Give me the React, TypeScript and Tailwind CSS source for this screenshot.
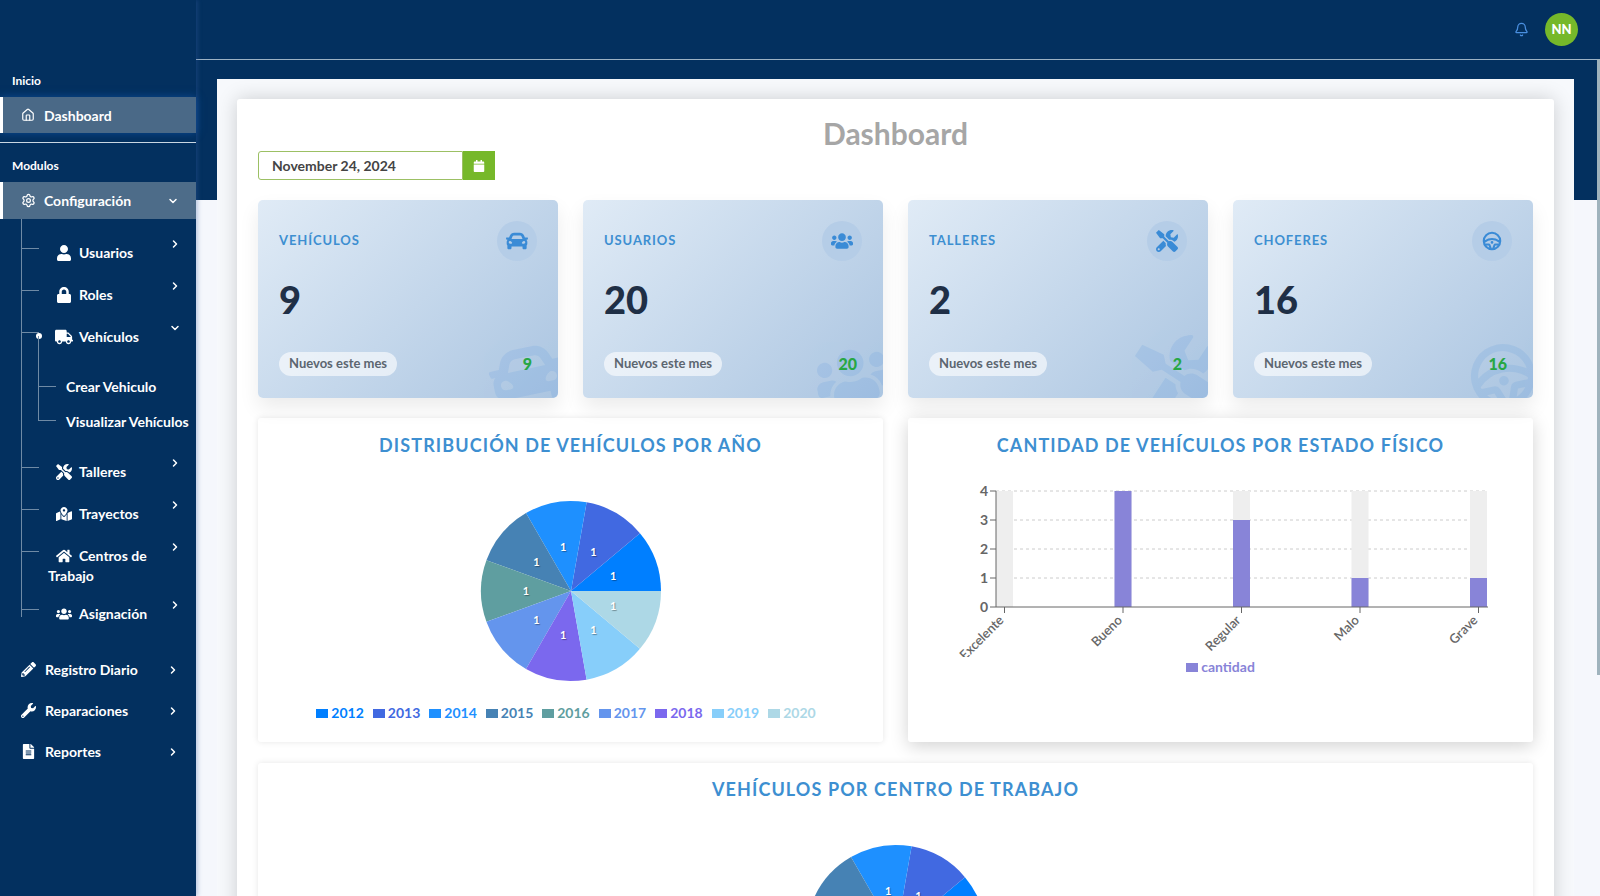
import { Bell, ChevronDown, ChevronRight, Home, Settings } from "lucide-react";
import { ReactNode } from "react";
import {
  FaCalendar,
  FaCar,
  FaFileAlt,
  FaHome,
  FaLock,
  FaMapMarkedAlt,
  FaPencilAlt,
  FaTools,
  FaTruck,
  FaUser,
  FaUsers,
  FaWrench,
} from "react-icons/fa";
import { PiSteeringWheelBold } from "react-icons/pi";

const slices = [
  { year: "2012", color: "#007fff" },
  { year: "2013", color: "#4169e1" },
  { year: "2014", color: "#1e90ff" },
  { year: "2015", color: "#4682b4" },
  { year: "2016", color: "#5f9ea0" },
  { year: "2017", color: "#6495ed" },
  { year: "2018", color: "#7b68ee" },
  { year: "2019", color: "#87cefa" },
  { year: "2020", color: "#add8e6" },
];

const bars = [
  { name: "Excelente", value: 0 },
  { name: "Bueno", value: 4 },
  { name: "Regular", value: 3 },
  { name: "Malo", value: 1 },
  { name: "Grave", value: 1 },
];

const stats = [
  { label: "VEHÍCULOS", value: "9", Icon: FaCar },
  { label: "USUARIOS", value: "20", Icon: FaUsers },
  { label: "TALLERES", value: "2", Icon: FaTools },
  { label: "CHOFERES", value: "16", Icon: PiSteeringWheelBold },
];

function Pie() {
  const cx = 100;
  const cy = 100;
  const r = 90;
  const step = (40 * Math.PI) / 180;
  return (
    <svg width="200" height="200" viewBox="0 0 200 200" className="mx-auto block shrink-0">
      {slices.map((s, i) => {
        const a0 = i * step;
        const a1 = (i + 1) * step;
        const d = `M${cx} ${cy}L${cx + r * Math.cos(a0)} ${cy - r * Math.sin(a0)}A${r} ${r} 0 0 0 ${cx + r * Math.cos(a1)} ${cy - r * Math.sin(a1)}Z`;
        return <path key={s.year} d={d} fill={s.color} />;
      })}
      {slices.map((s, i) => {
        const a = (i + 0.5) * step;
        return (
          <text
            key={s.year}
            x={cx + 45 * Math.cos(a)}
            y={cy - 45 * Math.sin(a) + 4}
            textAnchor="middle"
            fill="#fff"
            className="text-[11px] font-bold [text-shadow:1px_1px_1px_rgba(0,0,0,0.35)]"
          >
            1
          </text>
        );
      })}
    </svg>
  );
}

function BarChart() {
  const left = 88;
  const top = 20;
  const unit = 29;
  const bottom = top + unit * 4;
  const band = 118.5;
  return (
    <svg width="625" height="186" viewBox="0 0 625 186" className="block">
      {[0, 1, 2, 3].map((v) => (
        <line
          key={v}
          x1={left}
          x2={left + band * 4 + 18}
          y1={top + v * unit}
          y2={top + v * unit}
          stroke="#ccc"
          strokeDasharray="3 3"
        />
      ))}
      {bars.map((b, i) => {
        const x = left + i * band;
        return (
          <g key={b.name}>
            <rect x={x} y={top} width="17" height={unit * 4} fill="#eee" />
            <rect x={x} y={bottom - b.value * unit} width="17" height={b.value * unit} fill="#8884d8" />
            <line x1={x + 8.5} x2={x + 8.5} y1={bottom} y2={bottom + 6} stroke="#666" />
            <text
              x={x + 8.5}
              y={bottom + 14}
              textAnchor="end"
              fill="#666"
              transform={`rotate(-45 ${x + 8.5} ${bottom + 14})`}
              className="text-[13px] font-semibold"
            >
              {b.name}
            </text>
          </g>
        );
      })}
      <line x1={left} x2={left + band * 4 + 18} y1={bottom} y2={bottom} stroke="#666" />
      <line x1={left} x2={left} y1={top} y2={bottom} stroke="#666" />
      {[0, 1, 2, 3, 4].map((v) => (
        <g key={v}>
          <line x1={left - 6} x2={left} y1={bottom - v * unit} y2={bottom - v * unit} stroke="#666" />
          <text
            x={left - 8}
            y={bottom - v * unit + 5}
            textAnchor="end"
            fill="#666"
            className="text-[14px] font-bold"
          >
            {v}
          </text>
        </g>
      ))}
    </svg>
  );
}

function SubItem({
  icon,
  label,
  open,
  className,
}: {
  icon: ReactNode;
  label: string;
  open?: boolean;
  className?: string;
}) {
  return (
    <div className={`relative pl-[27px] pr-[30px] pt-[11px] text-[14px] font-bold leading-[20px] text-white ${className ?? "h-[42px]"}`}>
      <div className="absolute left-0 top-[16px] h-px w-[18px] bg-[#6f8aa5]" />
      <span className="inline-flex w-[31px] -translate-y-px items-center justify-center align-middle text-[16px]">
        {icon}
      </span>
      {label}
      <span className="absolute right-[15px] top-[6px]">
        {open ? <ChevronDown size={12} strokeWidth={3} /> : <ChevronRight size={12} strokeWidth={3} />}
      </span>
    </div>
  );
}

function MainItem({ icon, label }: { icon: ReactNode; label: string }) {
  return (
    <div className="flex h-[41px] items-center pl-[21px] pr-[17px] text-[14px] font-bold text-white">
      <span className="flex w-[24px] items-center text-[15px]">{icon}</span>
      <span className="flex-1">{label}</span>
      <ChevronRight size={12} strokeWidth={3} />
    </div>
  );
}

function Sidebar() {
  return (
    <aside className="relative z-10 h-screen w-[196px] shrink-0 bg-[#03305f] pt-[72px] shadow-[2px_0_4px_rgba(60,100,170,0.3)]">
      <div className="pl-[12px] text-[12px] font-bold leading-[17px] text-white">Inicio</div>
      <div className="mt-[8px] flex h-[36px] items-center border-l-[3px] border-white bg-[#4a6987] pl-[18px] text-[14px] font-bold text-white shadow-[0_0_8px_#0c4a94]">
        <Home size={14} className="mr-[9px]" />
        Dashboard
      </div>
      <div className="mt-[9px] h-px bg-[#c9d6e2]" />
      <div className="mt-[14px] pl-[12px] text-[12px] font-bold leading-[17px] text-white">Modulos</div>
      <div className="mt-[8px] flex h-[37px] items-center border-l-[3px] border-white bg-[#4d6c89] pl-[18px] pr-[17px] text-[14px] font-bold text-white">
        <Settings size={15} className="mr-[8px]" />
        <span className="flex-1">Configuración</span>
        <ChevronDown size={12} strokeWidth={3} />
      </div>

      <div className="relative ml-[21px] pt-[13px]">
        <div className="absolute bottom-[18px] left-0 top-0 w-px bg-[#6f8aa5]" />
        <SubItem icon={<FaUser />} label="Usuarios" />
        <SubItem icon={<FaLock />} label="Roles" />
        <SubItem icon={<FaTruck className="text-[18px]" />} label="Vehículos" open />
        <div className="relative pl-[45px] pt-[11px] pb-[12px] text-[14px] font-bold text-white">
          <div className="absolute left-[15px] top-[-25px] size-[6px] rounded-full bg-white" />
          <div className="absolute left-[17px] top-[-22px] h-[84px] w-px bg-[#6f8aa5]" />
          <div className="relative flex h-[35px] items-center">
            <div className="absolute left-[-28px] top-[17px] h-px w-[18px] bg-[#6f8aa5]" />
            Crear Vehiculo
          </div>
          <div className="relative flex h-[35px] items-center whitespace-nowrap">
            <div className="absolute left-[-28px] top-[16px] h-px w-[18px] bg-[#6f8aa5]" />
            Visualizar Vehículos
          </div>
        </div>
        <SubItem icon={<FaTools />} label="Talleres" />
        <SubItem icon={<FaMapMarkedAlt />} label="Trayectos" />
        <SubItem icon={<FaHome />} label="Centros de Trabajo" className="h-[58px]" />
        <SubItem icon={<FaUsers />} label="Asignación" />
      </div>

      <div className="mt-[14px]">
        <MainItem icon={<FaPencilAlt />} label="Registro Diario" />
        <MainItem icon={<FaWrench />} label="Reparaciones" />
        <MainItem icon={<FaFileAlt />} label="Reportes" />
      </div>
    </aside>
  );
}

function StatCard({ label, value, Icon }: (typeof stats)[number]) {
  return (
    <div className="relative h-[198px] overflow-hidden rounded-[5px] bg-[linear-gradient(135deg,#e0ebf6,#abc5e1)] px-[21px] pt-[21px] shadow-[0_10px_20px_rgba(0,0,0,0.08)]">
      <Icon className="absolute -bottom-[16px] -right-[8px] -rotate-12 text-[76px] text-[#4a90d9] opacity-15" />
      <div className="flex items-center justify-between">
        <span className="text-[13px] font-bold tracking-[0.9px] text-[#3d8fd1]">{label}</span>
        <span className="flex size-[40px] items-center justify-center rounded-full bg-[#b5cde7] text-[22px] text-[#3a8bd6]">
          <Icon />
        </span>
      </div>
      <div className="mt-[15px] text-[38px] font-black leading-[46px] text-[#1f2f46]">{value}</div>
      <div className="mt-[30px] flex items-center justify-between pr-[5px]">
        <span className="flex h-[24px] items-center rounded-full bg-white/60 px-[10px] text-[13px] font-bold text-[#5c6670]">
          Nuevos este mes
        </span>
        <span className="relative text-[16px] font-black text-[#28a745]">{value}</span>
      </div>
    </div>
  );
}

function ChartTitle({ children }: { children: ReactNode }) {
  return (
    <h2 className="text-center text-[18px] font-bold leading-[24px] tracking-[1.1px] text-[#3d8fd1]">{children}</h2>
  );
}

export default function App() {
  return (
    <div className="flex h-screen w-full overflow-hidden font-[Lato,sans-serif]">
      <Sidebar />
      <main className="relative h-screen flex-1 overflow-hidden bg-[linear-gradient(#03305f_200px,#f5f7fc_200px)]">
        {/* scrollbar thumb */}
        <div className="absolute right-0 top-[59px] z-20 h-[616px] w-[3px] bg-[#9fb3bd]" />

        <header className="flex h-[60px] items-center justify-end gap-[16px] border-b border-[#9db2c4] pr-[22px]">
          <Bell size={15} className="text-[#4a8fe0]" />
          <span className="flex size-[33px] items-center justify-center rounded-full bg-[#76b82a] text-[13px] font-black text-white">
            NN
          </span>
        </header>

        <div className="ml-[21px] mr-[26px] mt-[19px] bg-[#f7f9fc] p-[20px]">
          <div className="rounded-[3px] bg-white px-[21px] pb-[40px] pt-[16px] shadow-[0_0_20px_rgba(0,0,0,0.18)]">
            <h1 className="text-center text-[30px] font-bold leading-[36px] text-[#a6a6a6]">Dashboard</h1>

            <div className="flex h-[29px] w-[237px]">
              <div className="flex flex-1 items-center rounded-l-[3px] border border-[#9cc064] pl-[13px] text-[14px] font-bold text-[#444]">
                November 24, 2024
              </div>
              <div className="flex w-[32px] items-center justify-center bg-[#76b82a] text-[12px] text-white">
                <FaCalendar />
              </div>
            </div>

            <div className="mt-[20px] grid grid-cols-4 gap-[25px]">
              {stats.map((s) => (
                <StatCard key={s.label} {...s} />
              ))}
            </div>

            <div className="mt-[20px] grid grid-cols-2 gap-[25px]">
              <section className="h-[324px] rounded-[3px] bg-white pt-[15px] shadow-[0_0_6px_rgba(0,0,0,0.1)]">
                <ChartTitle>DISTRIBUCIÓN DE VEHÍCULOS POR AÑO</ChartTitle>
                <div className="mt-[34px]">
                  <Pie />
                </div>
                <div className="mt-[14px] flex justify-center gap-[9px] pr-[9px] text-[14px] font-bold leading-[16px]">
                  {slices.map((s) => (
                    <span key={s.year} className="flex items-center gap-[3px]" style={{ color: s.color }}>
                      <span className="h-[9px] w-[12px]" style={{ backgroundColor: s.color }} />
                      {s.year}
                    </span>
                  ))}
                </div>
              </section>

              <section className="h-[324px] rounded-[3px] bg-white pt-[15px] shadow-[0_4px_18px_rgba(0,0,0,0.18)]">
                <ChartTitle>CANTIDAD DE VEHÍCULOS POR ESTADO FÍSICO</ChartTitle>
                <div className="mt-[14px]">
                  <BarChart />
                </div>
                <div className="flex items-center justify-center gap-[3px] text-[14px] font-bold leading-[20px] text-[#8884d8]">
                  <span className="h-[9px] w-[12px] bg-[#8884d8]" />
                  cantidad
                </div>
              </section>
            </div>

            <section className="mt-[21px] rounded-[3px] bg-white pt-[14px] shadow-[0_0_6px_rgba(0,0,0,0.1)]">
              <ChartTitle>VEHÍCULOS POR CENTRO DE TRABAJO</ChartTitle>
              <div className="mt-[34px]">
                <Pie />
              </div>
            </section>
          </div>
        </div>
      </main>
    </div>
  );
}
